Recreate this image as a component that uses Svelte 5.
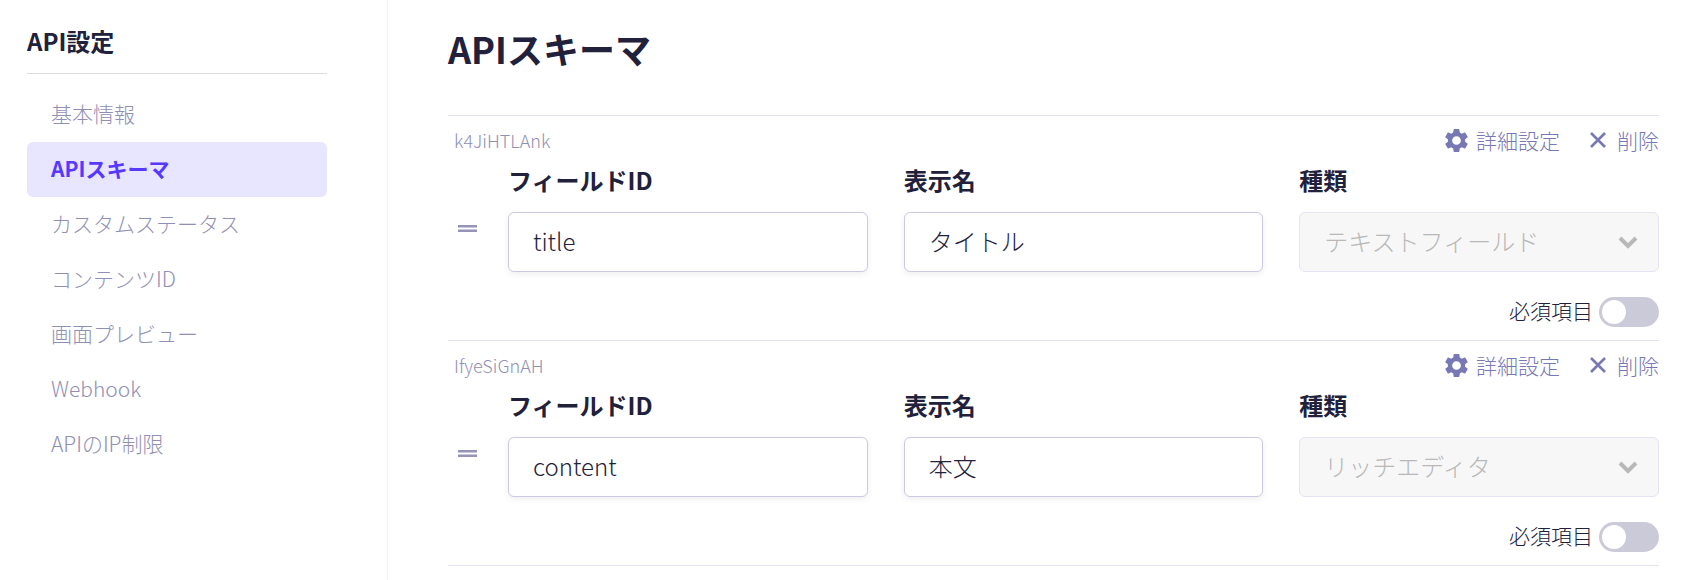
<script lang="ts">
	interface Field {
		key: string;
		fieldId: string;
		name: string;
		kind: string;
		required: boolean;
	}

	const menu = [
		'基本情報',
		'APIスキーマ',
		'カスタムステータス',
		'コンテンツID',
		'画面プレビュー',
		'Webhook',
		'APIのIP制限'
	];

	const kinds = ['テキストフィールド', 'リッチエディタ'];

	let current = $state('APIスキーマ');

	let fields = $state<Field[]>([
		{ key: 'k4JiHTLAnk', fieldId: 'title', name: 'タイトル', kind: 'テキストフィールド', required: false },
		{ key: 'IfyeSiGnAH', fieldId: 'content', name: '本文', kind: 'リッチエディタ', required: false }
	]);

	function removeField(key: string) {
		fields = fields.filter((f) => f.key !== key);
	}
</script>

<div class="layout">
	<aside class="sidebar">
		<h2>API設定</h2>
		<nav>
			{#each menu as item}
				<a href="#settings" class:active={item === current} onclick={() => (current = item)}>{item}</a>
			{/each}
		</nav>
	</aside>

	<main>
		<h1>APIスキーマ</h1>

		<div class="fields">
			{#each fields as field (field.key)}
				<section class="field">
					<div class="field-header">
						<span class="field-key">{field.key}</span>
						<div class="actions">
							<button class="action">
								<svg class="gear" viewBox="2 2 20 20" aria-hidden="true">
									<path
										fill-rule="evenodd"
										d="M19.43 12.98c.04-.32.07-.64.07-.98s-.03-.66-.07-.98l2.11-1.65c.19-.15.24-.42.12-.64l-2-3.46c-.12-.22-.39-.3-.61-.22l-2.49 1c-.52-.4-1.08-.73-1.69-.98l-.38-2.65C14.46 2.18 14.25 2 14 2h-4c-.25 0-.46.18-.49.42l-.38 2.65c-.61.25-1.17.59-1.69.98l-2.49-1c-.23-.09-.49 0-.61.22l-2 3.46c-.13.22-.07.49.12.64l2.11 1.65c-.04.32-.07.65-.07.98s.03.66.07.98l-2.11 1.65c-.19.15-.24.42-.12.64l2 3.46c.12.22.39.3.61.22l2.49-1c.52.4 1.08.73 1.69.98l.38 2.65c.03.24.24.42.49.42h4c.25 0 .46-.18.49-.42l.38-2.65c.61-.25 1.17-.59 1.69-.98l2.49 1c.23.09.49 0 .61-.22l2-3.46c.12-.22.07-.49-.12-.64l-2.11-1.65zM12 15.8a3.8 3.8 0 1 1 0-7.6 3.8 3.8 0 0 1 0 7.6z"
									/>
								</svg>
								詳細設定
							</button>
							<button class="action" onclick={() => removeField(field.key)}>
								<svg class="cross" viewBox="0 0 16 16" aria-hidden="true">
									<path d="M1 1L15 15M15 1L1 15" />
								</svg>
								削除
							</button>
						</div>
					</div>

					<div class="field-body">
						<button class="handle" aria-label="並び替え">
							<svg viewBox="0 0 19 8" aria-hidden="true">
								<path d="M0 1.3H19M0 5.7H19" />
							</svg>
						</button>
						<div class="columns">
							<div class="column">
								<label for="id-{field.key}">フィールドID</label>
								<input id="id-{field.key}" type="text" bind:value={field.fieldId} />
							</div>
							<div class="column">
								<label for="name-{field.key}">表示名</label>
								<input id="name-{field.key}" type="text" bind:value={field.name} />
							</div>
							<div class="column">
								<label for="kind-{field.key}">種類</label>
								<div class="select">
									<select id="kind-{field.key}" bind:value={field.kind} disabled>
										{#each kinds as kind}
											<option value={kind}>{kind}</option>
										{/each}
									</select>
									<svg viewBox="0 0 18 12" aria-hidden="true">
										<path d="M1 2L9 10L17 2" />
									</svg>
								</div>
							</div>
						</div>
					</div>

					<label class="required">
						必須項目
						<input type="checkbox" role="switch" bind:checked={field.required} />
					</label>
				</section>
			{/each}
		</div>
	</main>
</div>

<style>
	:global(body) {
		background: #fff;
	}

	.layout {
		display: flex;
		min-height: 100vh;
		color: #21213b;
		font-family: 'Noto Sans CJK JP', sans-serif;
		font-weight: 300;
	}

	.sidebar {
		box-sizing: border-box;
		flex: 0 0 388px;
		padding: 23px 60px 24px 27px;
		border-right: 1px solid #f0f0f5;
	}

	.sidebar h2 {
		margin: 0 0 13px;
		padding-bottom: 14px;
		border-bottom: 1px solid #dcdce0;
		font-size: 24px;
		font-weight: 700;
		line-height: 36px;
	}

	.sidebar nav {
		display: flex;
		flex-direction: column;
	}

	.sidebar nav a {
		padding: 0 24px 2px;
		border-radius: 6px;
		color: #9090b5;
		font-size: 21px;
		line-height: 53px;
		text-decoration: none;
	}

	.sidebar nav a.active {
		background: #e8e5ff;
		color: #5638ff;
		font-weight: 700;
	}

	main {
		flex: 1;
		min-width: 0;
		padding: 24px 39px 15px 60px;
	}

	h1 {
		margin: 0 0 43px;
		font-size: 36px;
		font-weight: 700;
		line-height: 48px;
	}

	.fields {
		border-bottom: 1px solid #e2e2f0;
	}

	.field {
		border-top: 1px solid #e2e2f0;
		padding: 8px 0 13px;
	}

	.field-header {
		display: flex;
		justify-content: space-between;
		align-items: center;
		height: 32px;
		padding-left: 6px;
	}

	.field-key {
		color: #9090b5;
		font-size: 18px;
	}

	.actions {
		display: flex;
		gap: 30px;
	}

	button {
		padding: 0;
		border: none;
		background: none;
		font: inherit;
		cursor: pointer;
	}

	.action {
		display: flex;
		align-items: center;
		color: #7878b5;
		font-size: 21px;
		line-height: 32px;
	}

	.gear {
		width: 23px;
		height: 23px;
		margin-right: 8px;
		fill: #7878b5;
	}

	.cross {
		width: 16px;
		height: 16px;
		margin-right: 11px;
		fill: none;
		stroke: #7878b5;
		stroke-width: 2.6;
	}

	.field-body {
		display: flex;
		padding-top: 3px;
	}

	.handle {
		display: flex;
		align-items: center;
		justify-content: center;
		width: 38px;
		height: 40px;
		margin: 50px 22px 0 0;
	}

	.handle svg {
		width: 19px;
		height: 8px;
		stroke: #9494b8;
		stroke-width: 2.6;
	}

	.columns {
		flex: 1;
		display: grid;
		grid-template-columns: repeat(3, minmax(0, 1fr));
		gap: 36px;
	}

	.column {
		display: flex;
		flex-direction: column;
		gap: 11px;
	}

	.column label {
		font-size: 24px;
		font-weight: 700;
		line-height: 42px;
	}

	.column input,
	.column select {
		box-sizing: border-box;
		width: 100%;
		height: 60px;
		margin: 0;
		padding: 0 24px 4px;
		border: 1px solid #ccc9e0;
		border-radius: 6px;
		background: #fff;
		box-shadow: 0 2px 6px rgba(33, 33, 59, 0.08);
		color: #21213b;
		font: inherit;
		font-size: 24px;
	}

	.select {
		display: grid;
		align-items: center;
	}

	.select select,
	.select svg {
		grid-area: 1 / 1;
	}

	.column select {
		appearance: none;
		border-color: #e4e4f2;
		background: #f7f7f7;
		box-shadow: none;
		color: #b8b8b8;
		opacity: 1;
	}

	.select svg {
		justify-self: end;
		width: 18px;
		height: 12px;
		margin-right: 22px;
		overflow: visible;
		fill: none;
		stroke: #b8b8b8;
		stroke-width: 4;
		pointer-events: none;
	}

	.required {
		display: flex;
		align-items: flex-start;
		gap: 6px;
		width: fit-content;
		margin: 25px 0 0 auto;
		font-size: 21px;
		line-height: 27px;
	}

	.required input {
		appearance: none;
		display: flex;
		box-sizing: border-box;
		width: 60px;
		height: 30px;
		margin: 0;
		padding: 3px;
		border-radius: 15px;
		background: #cbcad8;
		cursor: pointer;
	}

	.required input::before {
		content: '';
		width: 24px;
		height: 24px;
		border-radius: 50%;
		background: #fff;
	}

	.required input:checked {
		justify-content: flex-end;
		background: #5638ff;
	}
</style>
